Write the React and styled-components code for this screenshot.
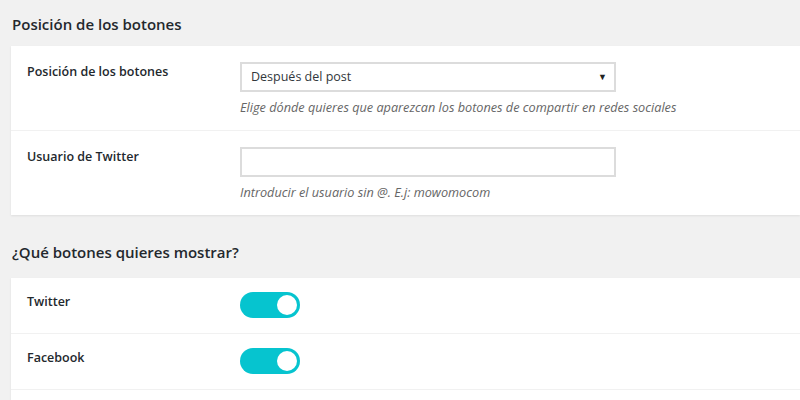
import styled, { createGlobalStyle } from "styled-components";

const GlobalStyle = createGlobalStyle`
  html, body {
    margin: 0;
    padding: 0;
    background: #f1f1f1;
    font-family: "Open Sans", "Noto Sans", Arial, sans-serif;
    color: #23282d;
  }
`;

const Page = styled.div`
  width: 800px;
  height: 400px;
  overflow: hidden;
  padding-left: 11px;
  box-sizing: border-box;
`;

const SectionTitle = styled.h2`
  margin: 0;
  padding: ${(p) => p.$top}px 0 0 1px;
  height: ${(p) => p.$height}px;
  box-sizing: border-box;
  font-size: 15px;
  font-weight: 600;
  line-height: 22px;
  color: #23282d;
`;

const Card = styled.div`
  background: #fff;
  box-shadow: 0 1px 2px rgba(0, 0, 0, 0.08);
`;

const Row = styled.div`
  display: grid;
  grid-template-columns: 213px 1fr;
  padding: ${(p) => (p.$toggle ? "14px 0 15px 16px" : "16px 0 14px 16px")};
  border-top: ${(p) => (p.$first ? "none" : "1px solid #f1f1f1")};
`;

const MoreRows = styled.div`
  height: 40px;
  border-top: 1px solid #f1f1f1;
`;

const Label = styled.div`
  font-size: 12.5px;
  font-weight: 600;
  line-height: 20px;
`;

const Field = styled.div`
  display: flex;
  flex-direction: column;
  align-items: flex-start;
`;

const SelectBox = styled.div`
  position: relative;
  width: 376px;
  height: 30px;
  box-sizing: border-box;
  border: 2px solid #dcdcdc;
  font-size: 12.5px;
  line-height: 26px;
  padding-left: 9px;
  color: #32373c;
`;

const Caret = styled.span`
  position: absolute;
  right: 7px;
  top: 0;
  font-size: 9px;
  color: #222;
`;

const TextInput = styled.input`
  width: 376px;
  height: 30px;
  box-sizing: border-box;
  border: 2px solid #dcdcdc;
  margin: 0;
  outline: none;
  font-family: inherit;
`;

const Help = styled.p`
  margin: 6px 0 0;
  font-size: 12.7px;
  font-style: italic;
  line-height: 18px;
  color: #666;
`;

const Toggle = styled.div`
  width: 60px;
  height: 26px;
  border-radius: 13px;
  background: #06c4cf;
  display: flex;
  align-items: center;
  justify-content: flex-end;
  padding-right: 3px;
  box-sizing: border-box;
  &::after {
    content: "";
    width: 20px;
    height: 20px;
    border-radius: 50%;
    background: #fff;
  }
`;

const networks = ["Twitter", "Facebook"];

export default function App() {
  return (
    <Page>
      <GlobalStyle />
      <SectionTitle $top={13} $height={46}>Posición de los botones</SectionTitle>
      <Card>
        <Row $first>
          <Label>Posición de los botones</Label>
          <Field>
            <SelectBox>
              Después del post
              <Caret>▼</Caret>
            </SelectBox>
            <Help>Elige dónde quieres que aparezcan los botones de compartir en redes sociales</Help>
          </Field>
        </Row>
        <Row>
          <Label>Usuario de Twitter</Label>
          <Field>
            <TextInput type="text" />
            <Help>Introducir el usuario sin @. E.j: mowomocom</Help>
          </Field>
        </Row>
      </Card>
      <SectionTitle $top={26} $height={63}>¿Qué botones quieres mostrar?</SectionTitle>
      <Card>
        {networks.map((n, i) => (
          <Row key={n} $toggle $first={i === 0}>
            <Label>{n}</Label>
            <Field>
              <Toggle />
            </Field>
          </Row>
        ))}
        <MoreRows />
      </Card>
    </Page>
  );
}
